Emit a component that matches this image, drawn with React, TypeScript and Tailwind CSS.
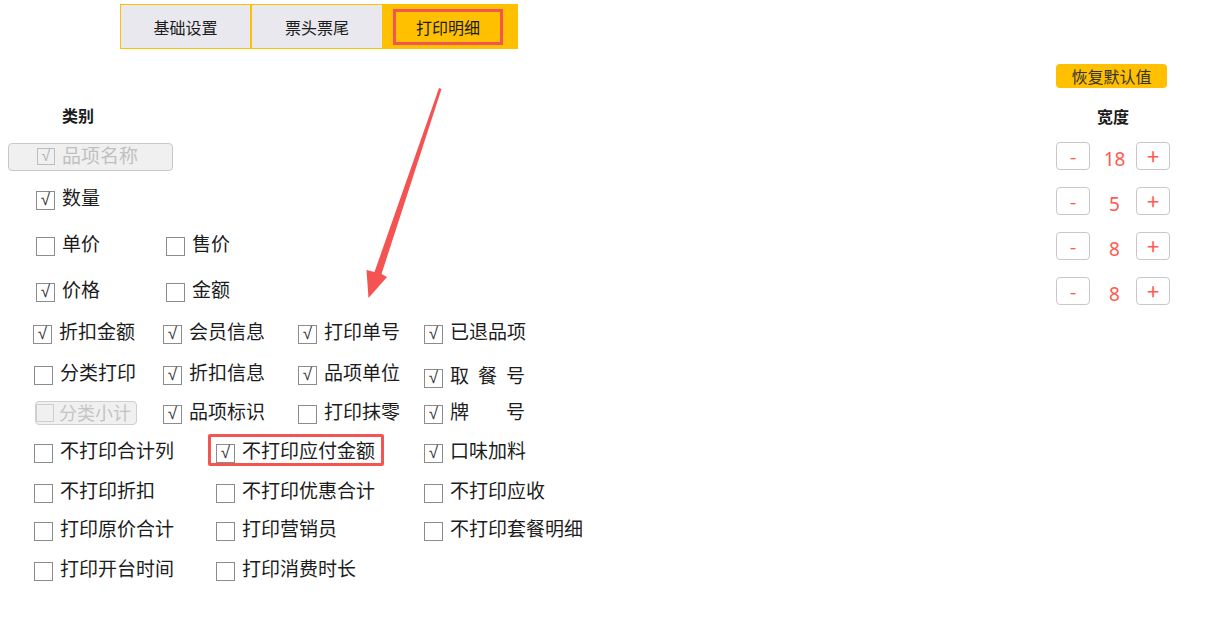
import React from 'react';

type ItemProps = {
  label: string;
  checked?: boolean;
  w?: string;
};

function Box({ checked, disabled }: { checked?: boolean; disabled?: boolean }) {
  return (
    <span
      className={`mt-[4px] w-[19px] h-[19px] shrink-0 border bg-white flex items-end justify-center font-['Liberation_Sans',sans-serif] text-[17px] leading-[18px] ${
        disabled ? 'border-[#c6c6c6] text-[#b4b4b4]' : 'border-[#8c8c8c] text-[#333]'
      }`}
    >
      {checked ? '√' : ''}
    </span>
  );
}

function Item({ label, checked, w = '' }: ItemProps) {
  return (
    <div className={`flex items-start shrink-0 ${w}`}>
      <Box checked={checked} />
      <span className="ml-[7px] text-[19px] leading-[20px] text-[#1c1c1c] whitespace-nowrap">{label}</span>
    </div>
  );
}

// 两端对齐的短标签，比如 “取 餐 号”
function SpreadItem({ chars, checked, w = '' }: { chars: string[]; checked?: boolean; w?: string }) {
  return (
    <div className={`flex items-start shrink-0 ${w}`}>
      <Box checked={checked} />
      <span className="ml-[7px] w-[75px] flex justify-between text-[19px] leading-[20px] text-[#1c1c1c]">
        {chars.map((c, i) => (
          <span key={i}>{c}</span>
        ))}
      </span>
    </div>
  );
}

function Stepper({ value }: { value: number }) {
  return (
    <div className="flex items-center h-[28px]">
      <button className="w-[34px] h-[28px] border border-[#c8c8c8] rounded-[4px] bg-white text-[#ff5a4f] text-[19px] leading-none flex items-center justify-center pb-[2px]">
        -
      </button>
      <span className="w-[46px] text-center text-[#ff5a4f] text-[19px] leading-[20px] pt-[5px] pl-[3px] font-['Noto_Sans',sans-serif]">
        {value}
      </span>
      <button className="w-[34px] h-[28px] border border-[#c8c8c8] rounded-[4px] bg-white text-[#ff5a4f] text-[22px] leading-none flex items-center justify-center pb-[2px]">
        +
      </button>
    </div>
  );
}

export default function App() {
  return (
    <div className="relative w-[1206px] h-[618px] bg-white overflow-hidden font-['Noto_Sans_CJK_SC','Noto_Sans',sans-serif] text-[#1c1c1c]">
      {/* tabs */}
      <div className="pt-[4px] pl-[120px]">
        <div className="flex w-[398px] h-[45px] border border-[#ffc000]">
          <div className="w-[131px] bg-[#e8e8ee] border-r-2 border-[#ffc000] flex items-center justify-center text-[16px]">
            基础设置
          </div>
          <div className="w-[130px] bg-[#e8e8ee] flex items-center justify-center text-[16px]">票头票尾</div>
          <div className="flex-1 bg-[#ffc000] pl-[11px] pr-[14px] pt-[4px] pb-[3px]">
            <div className="h-full border-[3px] border-[#f25552] flex items-center justify-center text-[16px]">
              打印明细
            </div>
          </div>
        </div>
      </div>

      <div className="flex justify-between">
        {/* left */}
        <div className="w-[620px]">
          <div className="h-[94px] pt-[56px] pl-[62px] text-[16px] leading-[20px] font-bold">类别</div>

          <div className="h-[44px]">
            <div className="ml-[8px] w-[165px] h-[28px] border border-[#c8c8c8] rounded-[4px] bg-[#f0f0f0] flex items-start pl-[28px]">
              <span className="mt-[4px] w-[18px] h-[17px] border border-[#bdbdbd] bg-[#f0f0f0] flex items-end justify-center font-['Liberation_Sans',sans-serif] text-[16px] leading-[16px] text-[#b0b0b0]">
                √
              </span>
              <span className="ml-[7px] mt-[1px] text-[19px] leading-[20px] text-[#c0c0c0]">品项名称</span>
            </div>
          </div>

          <div className="h-[46px] flex items-start pl-[36px]">
            <Item label="数量" checked />
          </div>
          <div className="h-[46px] flex items-start pl-[36px]">
            <Item label="单价" w="w-[130px]" />
            <Item label="售价" />
          </div>
          <div className="h-[42px] flex items-start pl-[36px]">
            <Item label="价格" checked w="w-[130px]" />
            <Item label="金额" />
          </div>

          <div className="h-[41px] flex items-start pl-[33px]">
            <Item label="折扣金额" checked w="w-[130px]" />
            <Item label="会员信息" checked w="w-[135px]" />
            <Item label="打印单号" checked w="w-[126px]" />
            <Item label="已退品项" checked />
          </div>
          <div className="h-[39px] flex items-start pl-[34px]">
            <Item label="分类打印" w="w-[129px]" />
            <Item label="折扣信息" checked w="w-[135px]" />
            <Item label="品项单位" checked w="w-[126px]" />
            <div className="mt-[3px]">
              <SpreadItem chars={['取', '餐', '号']} checked />
            </div>
          </div>
          <div className="h-[39px] flex items-start pl-[35px]">
            <div className="w-[128px] shrink-0">
              <div className="w-[102px] h-[24px] border border-[#cfcfcf] rounded-[4px] bg-[#f0f0f0] flex items-start">
                <span className="mt-[2px] w-[18px] h-[18px] shrink-0 border border-[#cfcfcf] bg-[#f0f0f0]" />
                <span className="ml-[5px] text-[18px] leading-[20px] text-[#c4c4c4] whitespace-nowrap">分类小计</span>
              </div>
            </div>
            <Item label="品项标识" checked w="w-[135px]" />
            <Item label="打印抹零" w="w-[126px]" />
            <SpreadItem chars={['牌', '号']} checked />
          </div>

          <div className="h-[40px] flex items-start pl-[34px]">
            <Item label="不打印合计列" w="w-[174px]" />
            <div className="-mt-[6px] w-[176px] h-[32px] border-[3px] border-[#f25552] rounded-[2px] pl-[5px] pt-[3px] shrink-0">
              <Item label="不打印应付金额" checked />
            </div>
            <div className="w-[40px] shrink-0" />
            <Item label="口味加料" checked />
          </div>
          <div className="h-[38px] flex items-start pl-[34px]">
            <Item label="不打印折扣" w="w-[182px]" />
            <Item label="不打印优惠合计" w="w-[208px]" />
            <Item label="不打印应收" />
          </div>
          <div className="h-[40px] flex items-start pl-[34px]">
            <Item label="打印原价合计" w="w-[182px]" />
            <Item label="打印营销员" w="w-[208px]" />
            <Item label="不打印套餐明细" />
          </div>
          <div className="h-[30px] flex items-start pl-[34px]">
            <Item label="打印开台时间" w="w-[182px]" />
            <Item label="打印消费时长" />
          </div>
        </div>

        {/* right */}
        <div className="w-[115px] mr-[35px] pt-[15px] flex flex-col items-start">
          <button className="w-[111px] h-[24px] rounded-[4px] bg-[#ffc000] text-[16px] leading-[20px] text-[#333] flex items-center justify-center">
            恢复默认值
          </button>
          <div className="w-[114px] mt-[18px] h-[20px] text-center text-[16px] leading-[20px] font-bold">宽度</div>
          <div className="mt-[16px] flex flex-col gap-[17px]">
            <Stepper value={18} />
            <Stepper value={5} />
            <Stepper value={8} />
            <Stepper value={8} />
          </div>
        </div>
      </div>

      {/* annotation arrow */}
      <svg className="absolute left-0 top-0 pointer-events-none" width="1206" height="618" viewBox="0 0 1206 618">
        <polygon
          points="439,88 441.5,89 381.5,274 387,277 368.5,298 366.5,270 374.5,272"
          fill="#f55252"
        />
      </svg>
    </div>
  );
}
